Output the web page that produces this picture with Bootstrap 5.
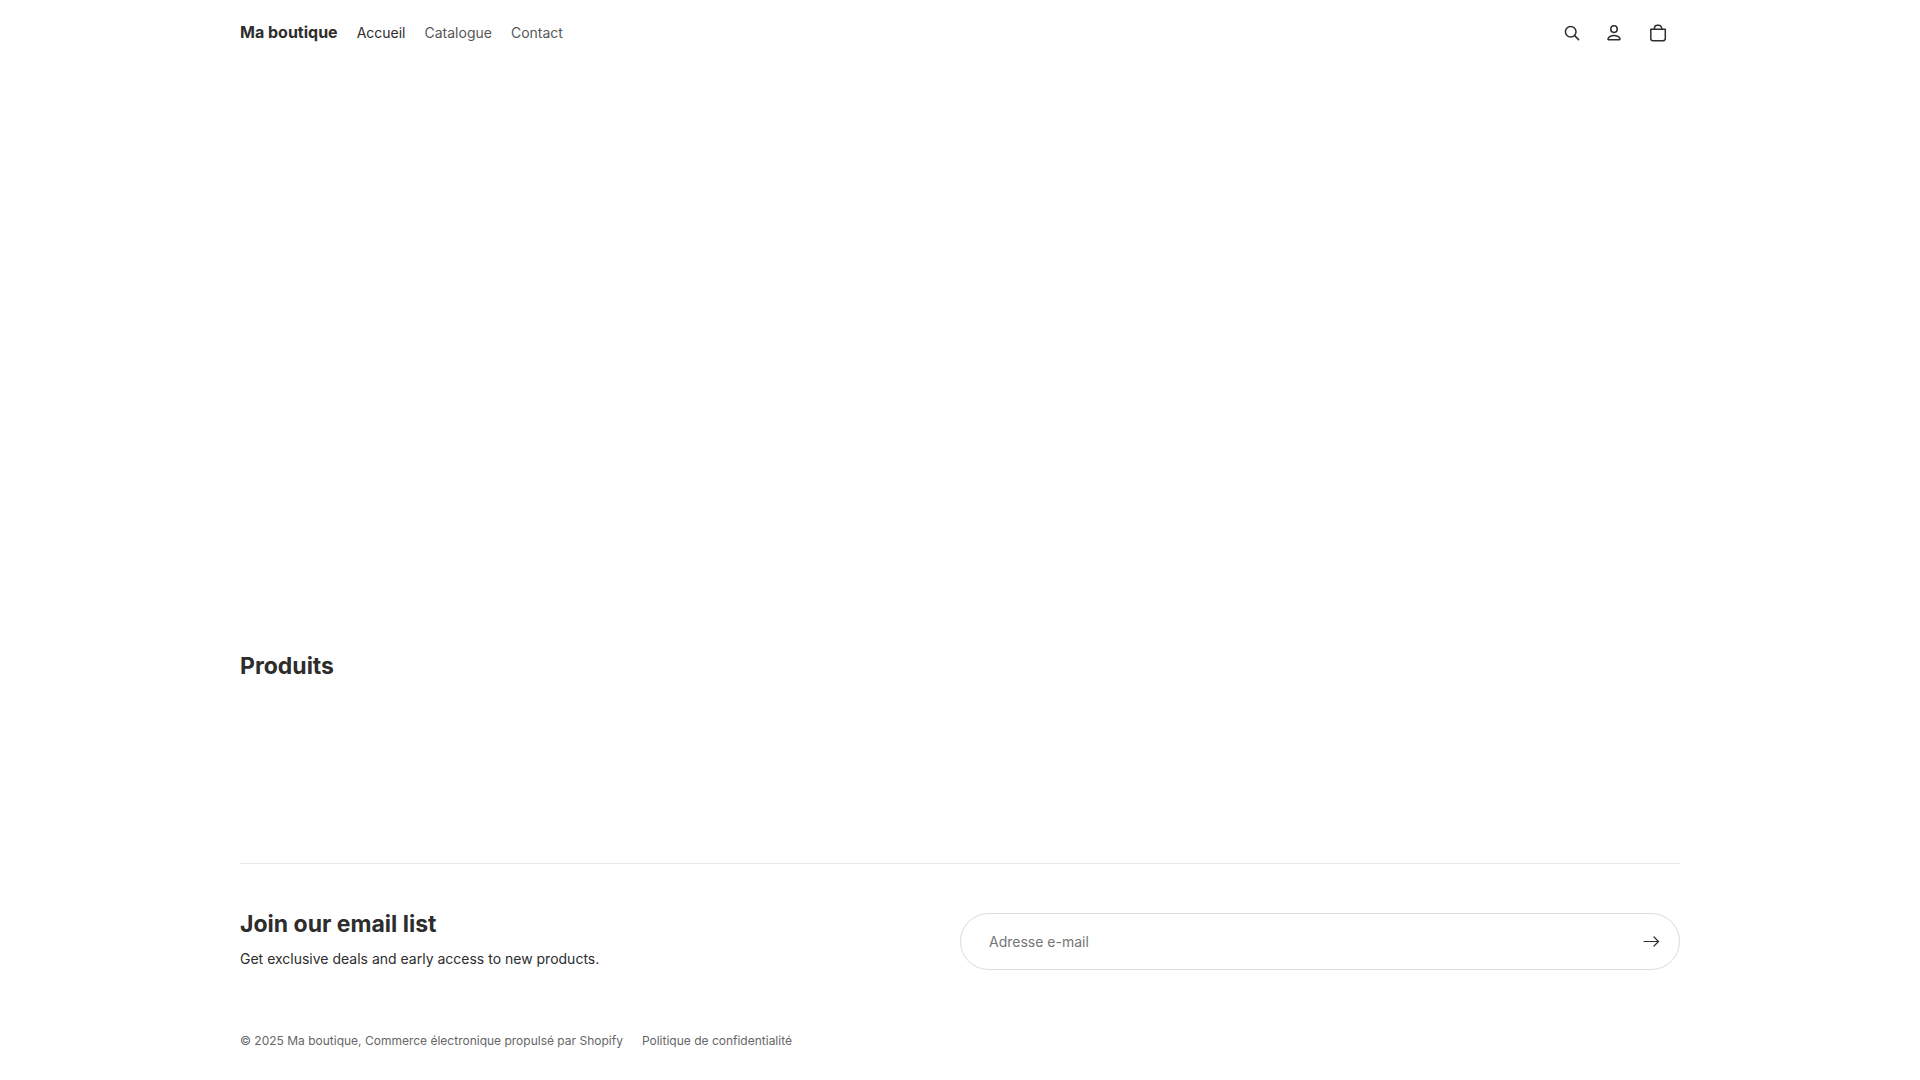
<!DOCTYPE html>
<html lang="fr">
<head>
<meta charset="utf-8">
<meta name="viewport" content="width=device-width, initial-scale=1">
<title>Ma boutique</title>
<link href="https://cdn.jsdelivr.net/npm/bootstrap@5.3.0/dist/css/bootstrap.min.css" rel="stylesheet">
<style>
  body { font-family: Inter, "Liberation Sans", sans-serif; font-size: 14px; line-height: 22px; color: #2d2d2d; background: #fff; }
  .shop-wrap { max-width: 1488px; padding-left: 24px; padding-right: 24px; }
  .shop-header { min-height: 66px; }
  .shop-name { font-size: 16px; line-height: 24px; font-weight: 700; color: #2d2d2d; }
  .shop-name, .shop-name:hover { padding-bottom: 2px; }
  .shop-links { column-gap: 19px; margin-left: 19px; }
  .shop-links .nav-link { color: #575757; }
  .shop-links .nav-link.active { color: #2d2d2d; }
  .icon-btn { width: 44px; height: 44px; color: #2d2d2d; }
  .icon-btn svg, .send-btn svg { display: block; fill: none; stroke: currentColor; stroke-linecap: round; stroke-linejoin: round; }
  .shop-heading { font-size: 23px; line-height: 32px; font-weight: 700; }
  .hero-space { min-height: 584px; }
  .products { min-height: 213px; }
  .footer-top { border-top: 1px solid #eaeaea; padding-top: 44px; }
  .signup { height: 57px; border: 1px solid #dcdcdc; border-radius: 29px; }
  .signup .form-control { font-size: 14px; padding: 0 28px; color: #2d2d2d; border-radius: 29px; }
  .signup .form-control::placeholder { color: #757575; }
  .send-btn { width: 56px; color: #2d2d2d; }
  .legal { font-size: 12px; line-height: 20px; color: #666; padding-top: 61px; column-gap: 19px; }
  .legal a { color: #666; }
</style>
<script src="https://cdn.jsdelivr.net/npm/bootstrap@5.3.0/dist/js/bootstrap.bundle.min.js" defer></script>
</head>
<body>
<header class="container-fluid shop-wrap">
  <nav class="navbar navbar-expand shop-header py-0 px-0" aria-label="Navigation principale">
    <a class="navbar-brand shop-name pt-0 me-0" href="#">Ma boutique</a>
    <ul class="navbar-nav shop-links">
      <li class="nav-item"><a class="nav-link active p-0" aria-current="page" href="#">Accueil</a></li>
      <li class="nav-item"><a class="nav-link p-0" href="#">Catalogue</a></li>
      <li class="nav-item"><a class="nav-link p-0" href="#">Contact</a></li>
    </ul>
    <div class="d-flex ms-auto">
      <button class="btn icon-btn border-0 p-0" type="button" aria-label="Recherche">
        <svg width="44" height="44" viewBox="0 0 44 44" stroke-width="1.5"><circle cx="22.700" cy="20.700" r="5.300"/><path d="M26.600 24.600l4 4"/></svg>
      </button>
      <button class="btn icon-btn border-0 p-0" type="button" aria-label="Compte">
        <svg width="44" height="44" viewBox="0 0 44 44" stroke-width="1.5"><rect x="18.800" y="14.800" width="6.400" height="6.600" rx="3.100"/><path d="M16.700 28.800h10.600a.8.8 0 0 0 .7-1.100c-.9-2.100-3.200-3.300-6-3.300s-5.100 1.200-6 3.300a.8.8 0 0 0 .7 1.100z"/></svg>
      </button>
      <button class="btn icon-btn border-0 p-0" type="button" aria-label="Panier">
        <svg width="44" height="44" viewBox="0 0 44 44" stroke-width="1.5"><path d="M14.800 18.300h14.500v9.200a2.300 2.300 0 0 1-2.300 2.300h-9.900a2.300 2.300 0 0 1-2.300-2.300zM18.400 18v-.7a3 3 0 0 1 3-3h1.300a3 3 0 0 1 3 3v.7"/></svg>
      </button>
    </div>
  </nav>
</header>
<main class="container-fluid shop-wrap">
  <div class="hero-space"></div>
  <section class="products">
    <h2 class="shop-heading m-0">Produits</h2>
  </section>
</main>
<footer class="container-fluid shop-wrap">
  <div class="footer-top">
    <div class="row g-0 align-items-end">
      <div class="col-12 col-md-6">
        <h2 class="shop-heading mb-2">Join our email list</h2>
        <p class="m-0">Get exclusive deals and early access to new products.</p>
      </div>
      <div class="col-12 col-md-6">
        <form class="signup d-flex">
          <input class="form-control border-0 bg-transparent shadow-none" id="email" type="email" placeholder="Adresse e-mail" aria-label="Adresse e-mail">
          <button class="btn send-btn border-0 p-0 d-flex align-items-center justify-content-center flex-shrink-0" type="submit" aria-label="S’inscrire">
            <svg width="20" height="20" viewBox="0 0 20 20" stroke-width="1.2"><path d="M3 9.500h14.500M13 5l4.500 4.500L13 14"/></svg>
          </button>
        </form>
      </div>
    </div>
  </div>
  <div class="legal d-flex flex-wrap">
    <span>© 2025 Ma boutique, <a class="text-decoration-none" href="#">Commerce électronique propulsé par Shopify</a></span>
    <a class="text-decoration-none" href="#">Politique de confidentialité</a>
  </div>
</footer>
</body>
</html>
